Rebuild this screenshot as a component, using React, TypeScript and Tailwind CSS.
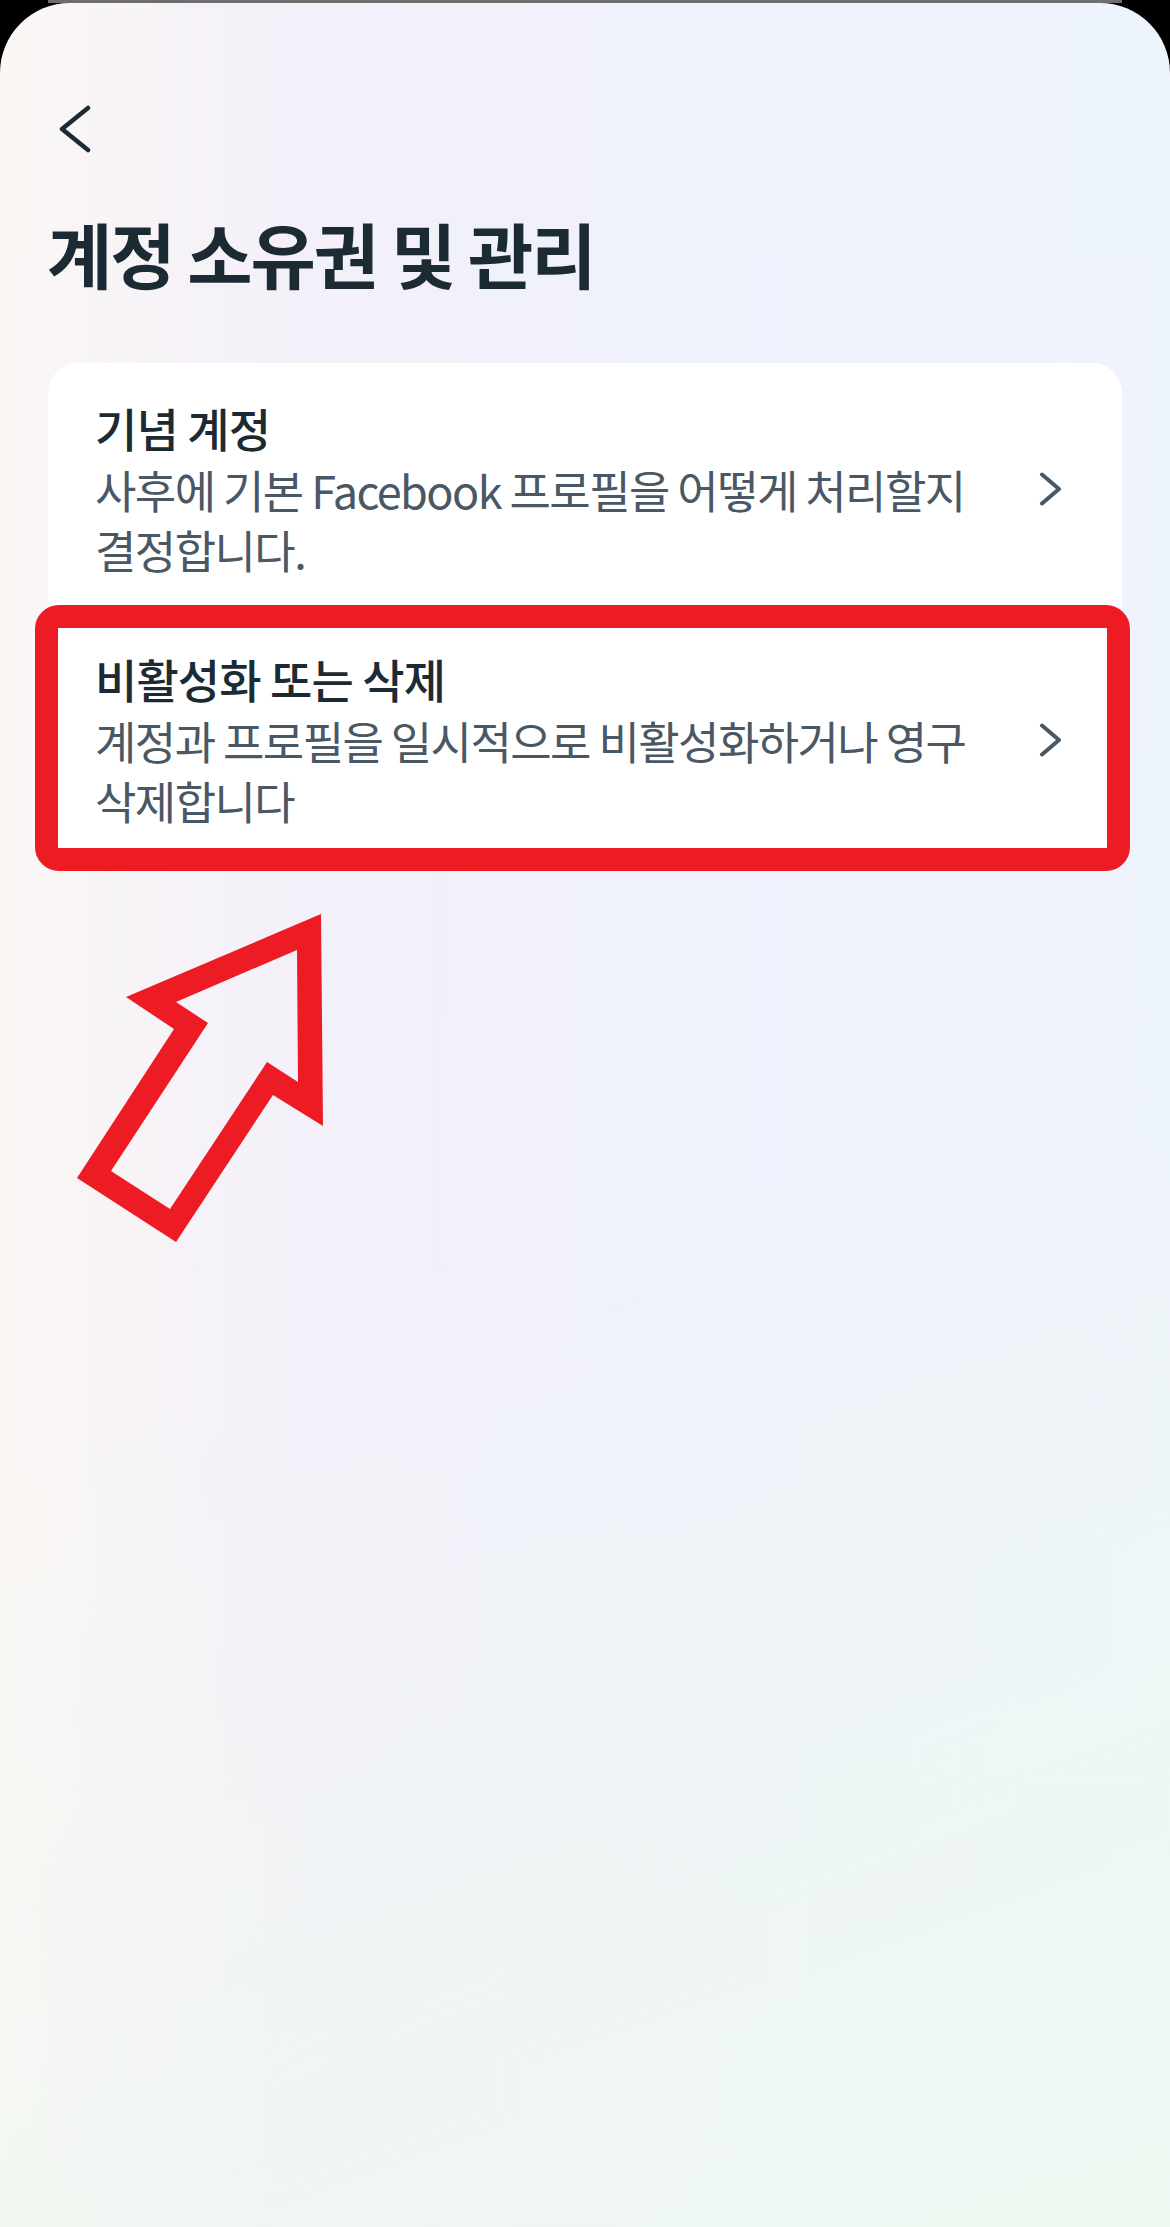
import { ReactNode } from 'react';

interface Item {
  title: string;
  description: string;
  highlighted?: boolean;
}

const items: Item[] = [
  {
    title: '기념 계정',
    description: '사후에 기본 Facebook 프로필을 어떻게 처리할지 결정합니다.',
  },
  {
    title: '비활성화 또는 삭제',
    description: '계정과 프로필을 일시적으로 비활성화하거나 영구 삭제합니다',
    highlighted: true,
  },
];

function ChevronRight() {
  return (
    <svg width="24" height="34" viewBox="0 0 24 34" fill="none" className="shrink-0">
      <path d="M3 2.5 L20 17 L3 31.5" stroke="#4a5866" strokeWidth="4" strokeLinecap="round" strokeLinejoin="round" />
    </svg>
  );
}

function Row({ item }: { item: Item }): ReactNode {
  return (
    <div className="relative flex items-center pl-[47px] pr-[59px] py-[34px]">
      <div className="flex-1 pr-[40px] break-keep">
        <div className="text-[46px] leading-[60px] font-medium text-[#1c2b33] tracking-[-0.02em]">{item.title}</div>
        <div className="mt-[3px] text-[45px] leading-[60px] text-[#4a5866] tracking-[-0.035em]">{item.description}</div>
      </div>
      <ChevronRight />
      {item.highlighted && (
        <div className="absolute -left-[13px] -right-[8px] -top-[9px] -bottom-[6px] border-[23px] border-[#ed1c24] rounded-[24px] pointer-events-none" />
      )}
    </div>
  );
}

export default function App() {
  return (
    <div className="min-h-[2227px] bg-black flex flex-col font-['Noto_Sans_CJK_KR','Noto_Sans',sans-serif]">
      <div className="mx-[48px] h-[3px] bg-[#6e6e6e] shrink-0" />
      <div className="flex-1 rounded-t-[70px] px-[48px] bg-[linear-gradient(160deg,rgba(255,255,255,0)_55%,#eff8f1_100%),linear-gradient(90deg,#fbf7f5_0%,#f3f0f9_25%,#eff1fb_55%,#eef4fc_100%)]">
        <button className="mt-[102px] ml-[4px] block">
          <svg width="48" height="48" viewBox="0 0 48 48" fill="none">
            <path d="M36 3 L10 24 L36 45" stroke="#1c2b33" strokeWidth="4.5" strokeLinecap="round" strokeLinejoin="round" />
          </svg>
        </button>

        <h1 className="mt-[58px] -ml-[1px] text-[71px] leading-[82px] font-bold text-[#1c2b33] tracking-[-0.03em]">
          계정 소유권 및 관리
        </h1>

        <div className="mt-[70px] bg-white rounded-[30px]">
          {items.map((item) => (
            <Row key={item.title} item={item} />
          ))}
        </div>

        <svg width="252" height="334" viewBox="75 915 252 334" className="mt-[46px] ml-[27px] block">
          <path
            fillRule="evenodd"
            fill="#ed1c24"
            d="M321 918 L323 1130 L273 1099 L176 1246 L77 1182 L174 1033 L126 1001 Z M297 954 L176 1006 L208 1027 L111 1175 L170 1213 L267 1066 L298 1086 Z"
          />
        </svg>
      </div>
    </div>
  );
}
